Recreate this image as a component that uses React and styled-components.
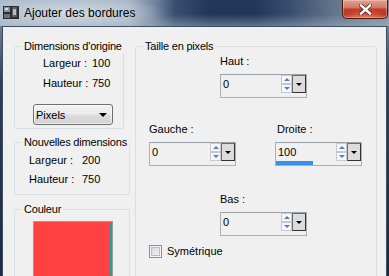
import React from 'react';
import styled, { createGlobalStyle } from 'styled-components';

const GlobalStyle = createGlobalStyle`
  html, body {
    margin: 0;
    padding: 0;
  }
  body {
    width: 389px;
    height: 276px;
    overflow: hidden;
    background: #1c2b42;
    font-family: 'Liberation Sans', Arial, sans-serif;
    color: #000;
  }
`;

const Window = styled.div`
  width: 389px;
  height: 276px;
  display: flex;
  flex-direction: column;
  overflow: hidden;
  background: linear-gradient(180deg, #8a9bb0 0%, #2c3d57 30%, #1b2a40 100%);
`;

const TitleBar = styled.div`
  height: 26px;
  flex: none;
  display: flex;
  align-items: flex-start;
  background:
    radial-gradient(ellipse 95px 17px at 72px 13px, rgba(214, 222, 231, 0.9), rgba(214, 222, 231, 0) 100%),
    linear-gradient(180deg, rgba(255, 255, 255, 0) 55%, rgba(170, 184, 200, 0.45) 100%),
    linear-gradient(90deg, #adbccc 0%, #a7b6c7 33%, #7a8ca4 39%, #3a4f70 45%, #213658 54%, #22375a 66%, #3b5071 75%, #63758c 86%, #8494a7 100%);
`;

const TitleIcon = styled.svg`
  margin: 6px 0 0 3px;
  flex: none;
`;

const TitleText = styled.span`
  margin-left: 5px;
  font-size: 12px;
  line-height: 26px;
  color: #000;
`;

const CloseButton = styled.div`
  width: 46px;
  height: 19px;
  margin: 0 1px 0 auto;
  box-sizing: border-box;
  border: 1px solid #4a1a12;
  border-top: none;
  border-radius: 0 0 5px 5px;
  background:
    radial-gradient(ellipse 24px 9px at 50% 100%, rgba(255, 160, 120, 0.6), rgba(255, 160, 120, 0) 100%),
    linear-gradient(180deg, #e2a193 0%, #d47866 42%, #c2402a 50%, #b8321f 78%, #c4503a 100%);
  box-shadow: inset 0 0 0 1px rgba(255, 230, 220, 0.35);
  display: flex;
  align-items: center;
  justify-content: center;
`;

const Content = styled.div`
  flex: 1;
  min-height: 0;
  margin: 0 2px;
  border: 1px solid #3f4f63;
  border-bottom: none;
  background: #f0f0f0;
  display: flex;
  align-items: flex-start;
  gap: 5px;
  padding: 13px 0 0 11px;
`;

const Column = styled.div`
  display: flex;
  flex-direction: column;
  align-items: flex-start;
`;

const Group = styled.fieldset`
  margin: ${p => p.$mt || 0}px 0 0;
  padding: 0;
  min-width: 0;
  width: ${p => p.$width}px;
  ${p => (p.$height ? `height: ${p.$height}px;` : '')}
  box-sizing: border-box;
  border: 1px solid #d5dfe5;
  border-radius: 3px;
`;

const Legend = styled.legend`
  margin-left: 7px;
  padding: 0 2px;
  font-size: 11px;
  line-height: 13px;
  letter-spacing: -0.2px;
  white-space: nowrap;
`;

const GroupBody = styled.div`
  padding: ${p => p.$pad};
`;

const InfoRow = styled.div`
  display: grid;
  grid-template-columns: ${p => p.$labelWidth}px auto;
  padding-left: ${p => p.$indent}px;
  font-size: 11px;
  line-height: ${p => p.$lh}px;
  white-space: nowrap;
`;

const Select = styled.div`
  width: 80px;
  height: 21px;
  margin: 11px 0 0 18px;
  box-sizing: border-box;
  border: 1px solid #707070;
  border-radius: 3px;
  background: linear-gradient(180deg, #f3f3f3 0%, #ebebeb 48%, #dddddd 52%, #d2d2d2 100%);
  box-shadow: inset 0 0 0 1px rgba(255, 255, 255, 0.6);
  display: flex;
  align-items: center;
  justify-content: space-between;
  padding: 0 5px 0 2px;
  font-size: 11px;
`;

const DownArrow = styled.span`
  width: 0;
  height: 0;
  border-left: ${p => p.$size}px solid transparent;
  border-right: ${p => p.$size}px solid transparent;
  border-top: ${p => p.$size}px solid ${p => p.$color};
`;

const UpArrow = styled.span`
  width: 0;
  height: 0;
  border-left: 3px solid transparent;
  border-right: 3px solid transparent;
  border-bottom: 3px solid #5b7cc4;
`;

const Swatch = styled.div`
  width: 80px;
  height: 70px;
  margin-left: 18px;
  box-sizing: border-box;
  border: 1px solid #9c9c9c;
  background: #ff4141;
  padding: 1px;
`;

const SwatchFocus = styled.div`
  height: 100%;
  box-sizing: border-box;
  border: 1px dotted #1f9f9f;
`;

const FieldRow = styled.div`
  display: flex;
  gap: 39px;
  margin: ${p => p.$mt}px 0 0 ${p => p.$ml || 0}px;
`;

const Field = styled.div`
  display: flex;
  flex-direction: column;
`;

const FieldLabel = styled.span`
  font-size: 11px;
  line-height: 14px;
  margin-bottom: 6px;
  padding-left: ${p => p.$shift || 0}px;
`;

const SpinBox = styled.div`
  width: 87px;
  height: 24px;
  box-sizing: border-box;
  border: 1px solid #abb0b6;
  border-top-color: #9ba1a8;
  display: flex;
  flex-direction: column;
  background: #f0f0f0;
`;

const SpinTop = styled.div`
  display: flex;
  height: 18px;
`;

const SpinValue = styled.span`
  flex: 1;
  padding-left: 2px;
  font-size: 11px;
  line-height: 18px;
`;

const SpinArrows = styled.div`
  width: 11px;
  display: flex;
  flex-direction: column;
`;

const ArrowButton = styled.div`
  flex: 1;
  box-sizing: border-box;
  border: 1px solid #c3cad4;
  background: #f6f7f9;
  display: flex;
  align-items: center;
  justify-content: center;
`;

const DropButton = styled.div`
  width: 14px;
  box-sizing: border-box;
  border: 1px solid #333;
  border-left-color: #6c6c6c;
  border-top-color: #6c6c6c;
  background: #dcdcdc;
  display: flex;
  align-items: center;
  justify-content: center;
`;

const SliderTrack = styled.div`
  height: 4px;
`;

const SliderFill = styled.div`
  height: 100%;
  background: #3a8fe6;
`;

const CheckRow = styled.label`
  display: flex;
  align-items: center;
  gap: 5px;
  margin-top: 9px;
  font-size: 11px;
  line-height: 13px;
`;

const CheckBox = styled.span`
  width: 13px;
  height: 13px;
  box-sizing: border-box;
  border: 1px solid #8e8f8f;
  background: linear-gradient(135deg, #c9ccd1 0%, #e9eaec 60%, #f6f6f6 100%);
  box-shadow: inset 0 0 0 1px #f4f4f4, inset 0 0 0 2px #b9bcc1;
`;

const Spin = ({ value }) => (
  <SpinBox>
    <SpinTop>
      <SpinValue>{value}</SpinValue>
      <SpinArrows>
        <ArrowButton>
          <UpArrow />
        </ArrowButton>
        <ArrowButton>
          <DownArrow $size={3} $color="#5b7cc4" />
        </ArrowButton>
      </SpinArrows>
      <DropButton>
        <DownArrow $size={3} $color="#000" />
      </DropButton>
    </SpinTop>
    <SliderTrack>
      <SliderFill style={{ width: Math.round(value * 0.37) }} />
    </SliderTrack>
  </SpinBox>
);

const Info = ({ label, value, labelWidth, indent, lh }) => (
  <InfoRow $labelWidth={labelWidth} $indent={indent} $lh={lh}>
    <span>{label}</span>
    <span>{value}</span>
  </InfoRow>
);

export default function App() {
  return (
    <>
      <GlobalStyle />
      <Window>
        <TitleBar>
          <TitleIcon width="16" height="13" viewBox="0 0 16 13">
            <rect x="0" y="0" width="16" height="13" fill="#2a2e33" />
            <rect x="1" y="1" width="6" height="5" fill="#8c949c" />
            <rect x="2" y="2" width="3" height="2" fill="#d8dde2" />
            <rect x="9" y="1" width="5" height="10" fill="#585f66" />
            <rect x="10" y="3" width="3" height="6" fill="#b5bcc3" />
            <rect x="1" y="8" width="6" height="4" fill="#6b7279" />
          </TitleIcon>
          <TitleText>Ajouter des bordures</TitleText>
          <CloseButton>
            <svg width="13" height="11" viewBox="0 0 13 11">
              <path d="M2 1.5 L11 9.5 M11 1.5 L2 9.5" stroke="#5a2a22" strokeWidth="4.2" strokeLinecap="square" />
              <path d="M2 1.5 L11 9.5 M11 1.5 L2 9.5" stroke="#fff" strokeWidth="2.4" strokeLinecap="square" />
            </svg>
          </CloseButton>
        </TitleBar>
        <Content>
          <Column>
            <Group $width={110}>
              <Legend>Dimensions d'origine</Legend>
              <GroupBody $pad="0 0 3px">
                <Info label="Largeur :" value="100" labelWidth={49} indent={28} lh={20} />
                <Info label="Hauteur :" value="750" labelWidth={49} indent={28} lh={20} />
                <Select>
                  <span>Pixels</span>
                  <DownArrow $size={4} $color="#000" />
                </Select>
              </GroupBody>
            </Group>
            <Group $width={116} $mt={7}>
              <Legend>Nouvelles dimensions</Legend>
              <GroupBody $pad="2px 0 5px">
                <Info label="Largeur :" value="200" labelWidth={53} indent={14} lh={19} />
                <Info label="Hauteur :" value="750" labelWidth={53} indent={14} lh={19} />
              </GroupBody>
            </Group>
            <Group $width={116} $mt={8} $height={90}>
              <Legend>Couleur</Legend>
              <GroupBody $pad="5px 0 0">
                <Swatch>
                  <SwatchFocus />
                </Swatch>
              </GroupBody>
            </Group>
          </Column>
          <Group $width={242} $height={260}>
            <Legend>Taille en pixels</Legend>
            <GroupBody $pad="1px 0 0 13px">
              <FieldRow $mt={0} $ml={71}>
                <Field>
                  <FieldLabel>Haut :</FieldLabel>
                  <Spin value={0} />
                </Field>
              </FieldRow>
              <FieldRow $mt={24}>
                <Field>
                  <FieldLabel>Gauche :</FieldLabel>
                  <Spin value={0} />
                </Field>
                <Field>
                  <FieldLabel $shift={2}>Droite :</FieldLabel>
                  <Spin value={100} />
                </Field>
              </FieldRow>
              <FieldRow $mt={26} $ml={71}>
                <Field>
                  <FieldLabel>Bas :</FieldLabel>
                  <Spin value={0} />
                </Field>
              </FieldRow>
              <CheckRow>
                <CheckBox />
                <span>Symétrique</span>
              </CheckRow>
            </GroupBody>
          </Group>
        </Content>
      </Window>
    </>
  );
}
